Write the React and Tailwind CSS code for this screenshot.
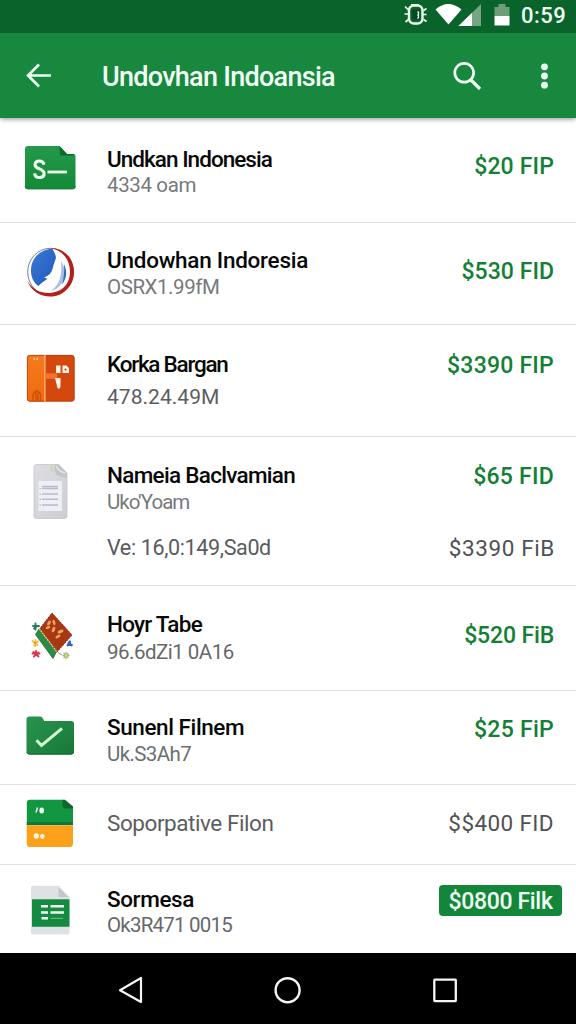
import React from "react";

function SheetFolderIcon() {
  return (
    <svg viewBox="0 0 56 56" className="size-14">
      <defs>
        <linearGradient id="sf" x1="0" y1="0" x2="0" y2="1">
          <stop offset="0" stopColor="#24994a" />
          <stop offset="1" stopColor="#138a38" />
        </linearGradient>
      </defs>
      <path d="M6 6h31.500l7.500 8h6a2.500 2.500 0 0 1 2.500 2.500V46a3 3 0 0 1-3 3H6a3 3 0 0 1-3-3V9a3 3 0 0 1 3-3Z" fill="url(#sf)" />
      <path d="M37.500 6l7.500 8h7.500l-1 1.500H38Z" fill="#0b6b2b" />
      <path d="M3 46a3 3 0 0 0 3 3h44.500a3 3 0 0 0 3-3" fill="none" stroke="#0c7630" strokeWidth="0.800" />
      <path d="M22 24.600C21.400 21.800 20 21 17.300 21c-2.700 0-4.200 1.400-4.200 3.700 0 5 9 3.400 9 8.800 0 2.600-1.800 4-4.600 4-3 0-4.600-1.400-4.900-4.200" fill="none" stroke="#eefff2" strokeWidth="3.100" />
      <path d="M25.500 32H45" stroke="#eefff2" strokeWidth="2.800" />
    </svg>
  );
}

function EmblemIcon() {
  return (
    <svg viewBox="0 0 56 56" className="size-14">
      <defs>
        <linearGradient id="em" x1="0" y1="0" x2="1" y2="1">
          <stop offset="0" stopColor="#3a7ad8" />
          <stop offset="1" stopColor="#2059b8" />
        </linearGradient>
      </defs>
      <ellipse cx="28.500" cy="28" rx="22.800" ry="23.700" fill="#fff" stroke="#66718f" strokeWidth="0.900" />
      <path d="M28 4c14 0 24 10 24 24S41 52.500 28.500 52.500C18 52.500 9 47 5.500 37 11 46 19 49.500 28 49c12-.8 20-9 20-21C48 15 40 6 28 4Z" fill="#b3201c" />
      <path d="M30 4.500C17 6 8.500 15 9 27.500c.2 6.500 3 11.500 7.500 14.500 2-2.500 5-4.500 9-7.200l-3.500-1.300c4.500-1.500 7.500-4.500 8.500-8.500 1-4.500 2.500-8 3.500-11C33.500 10 32 7 30 4.500Z" fill="url(#em)" />
      <path d="M39 17c4.500 7 5 14.500 1.500 21-2.700 5-7 8-11.500 8.500 8-5 11.500-14 10-29.500Z" fill="#a9bfe6" />
      <path d="M42 20c3.500 7.500 2.800 14.500-2 20.500 2-6.500 2.500-13.500 2-20.500Z" fill="#326bbd" />
    </svg>
  );
}

function OrangeBoxIcon() {
  return (
    <svg viewBox="0 0 56 56" className="size-14">
      <defs>
        <linearGradient id="ob" x1="0" y1="0" x2="0" y2="1">
          <stop offset="0" stopColor="#f57a20" />
          <stop offset="1" stopColor="#f26a0c" />
        </linearGradient>
      </defs>
      <rect x="5" y="5" width="47.500" height="46.500" rx="3" fill="#d4480d" />
      <path d="M8 5h14.500v46.500H8a3 3 0 0 1-3-3V8a3 3 0 0 1 3-3Z" fill="url(#ob)" />
      <rect x="5.400" y="5.400" width="46.700" height="45.700" rx="2.800" fill="none" stroke="#b93e0b" strokeWidth="0.800" />
      <path d="M22.900 5v46.500" stroke="#ffc58e" strokeWidth="1.200" />
      <path d="M23 23.300h12v5.500H23Z" fill="#f57428" />
      <path d="M34 15.500h4.500V23H34Z" fill="#fff4e8" />
      <path d="M40.500 15.500h4l2.500 2.800V23h-6.500Z" fill="#fff4e8" />
      <circle cx="43.500" cy="19.600" r="1.100" fill="#c4400d" />
      <path d="M33 28h5.500v8c0 1.800-.6 2.700-1.700 2.700S35 37.500 34.800 35Z" fill="#fff4e8" />
      <path d="M11.500 8.500l1.500 1m1.500-.5h1.500" stroke="#ffe5cc" strokeWidth="1.500" />
      <path d="M11 51v-7l3-3v10m2 0V41l2.500 3v7" fill="none" stroke="#c94e08" strokeWidth="1.300" />
    </svg>
  );
}

function DocumentIcon() {
  return (
    <svg viewBox="0 0 56 56" className="size-14">
      <defs>
        <linearGradient id="dc" x1="0" y1="0" x2="1" y2="1">
          <stop offset="0" stopColor="#dddde2" />
          <stop offset="1" stopColor="#cdced5" />
        </linearGradient>
      </defs>
      <path d="M14.500 1.500h22L45 10v43a2.500 2.500 0 0 1-2.500 2.500h-28A2.500 2.500 0 0 1 12 53V4a2.500 2.500 0 0 1 2.500-2.500Z" fill="url(#dc)" stroke="#bfc0c8" strokeWidth="0.700" />
      <path d="M33 1.500h4L45 10v5l-8.500-2C33 11.500 31.500 6 33 1.500Z" fill="#c3c5c8" />
      <path d="M34.500 3c1 4 3.500 6 9 6.800" fill="none" stroke="#e6e6e8" strokeWidth="1.300" />
      <path d="M30 2.800c-1.500 2-1 4 1.500 5.500" fill="none" stroke="#c8d89e" strokeWidth="1.600" />
      <path d="M16.500 18H40v30H16.500Z" fill="#eeeff5" />
      <path d="M20 23.500h16M20 25.500h16M20 31h16M20 36.300h16M20 42h16" stroke="#b9bbc7" strokeWidth="1.500" />
      <path d="M17.500 25.500h1.500M17.500 31H19M17.500 36.300H19M17.500 42H19" stroke="#adafba" strokeWidth="1.200" />
    </svg>
  );
}

function CarpetIcon() {
  return (
    <svg viewBox="0 0 56 56" className="size-14">
      <path d="M30 5 50 27 34.500 44.500 17.500 21Z" fill="#a83813" stroke="#7d2a12" strokeWidth="1" strokeDasharray="2 1" />
      <path d="M17 21 34.500 43.500 31 50.500 13.500 26.500Z" fill="#2d8a45" stroke="#20663a" strokeWidth="0.800" />
      <path d="M17 20.500 35 44" stroke="#ecd9a0" strokeWidth="1.200" strokeDasharray="2 0.700" />
      <g fill="#e9a566">
        <ellipse cx="27" cy="15" rx="1.500" ry="2.600" transform="rotate(35 27 15)" />
        <ellipse cx="32" cy="14.500" rx="1.400" ry="2.800" transform="rotate(-15 32 14.500)" />
        <ellipse cx="26" cy="19.500" rx="1.200" ry="2.400" transform="rotate(70 26 19.500)" />
        <ellipse cx="31.500" cy="21.500" rx="1.500" ry="3" transform="rotate(25 31.500 21.500)" />
        <ellipse cx="38.500" cy="23.500" rx="1.600" ry="3.200" transform="rotate(65 38.500 23.500)" />
        <ellipse cx="36" cy="28.500" rx="1.300" ry="2.800" transform="rotate(60 36 28.500)" />
      </g>
      <path d="M13.500 15.500v6M11 18h6M12 20.500l3.500-2.500" stroke="#237b60" strokeWidth="1.900" strokeLinecap="round" />
      <path d="M10.500 33l5 4M12 37.500l4-4M13.500 32v6" stroke="#f1c33b" strokeWidth="1.900" strokeLinecap="round" />
      <path d="M11.500 44l5 4.500M12 48.500l4.500-4M14 43v4M10.500 45.500h7" stroke="#d8344e" strokeWidth="1.900" strokeLinecap="round" />
      <path d="M47.500 33.500l-2 4M48 33.500v2M49.500 37.500l-2-3M46 37h4" stroke="#2f66c4" strokeWidth="1.900" strokeLinecap="round" />
      <path d="M44 44.500v6M41 47.500h6M42 45.500l4 4M42 49.500l4-4" stroke="#9fba68" strokeWidth="1.300" strokeLinecap="round" />
      <path d="M36 44.500l4 2.500" stroke="#6b8a4c" strokeWidth="0.800" />
      <circle cx="44" cy="47.500" r="1.200" fill="#e6dc8a" />
      <circle cx="13" cy="35" r="0.900" fill="#d97b2c" />
    </svg>
  );
}

function CheckFolderIcon() {
  return (
    <svg viewBox="0 0 56 56" className="size-14">
      <defs>
        <linearGradient id="cf" x1="0" y1="0" x2="1" y2="1">
          <stop offset="0" stopColor="#299451" />
          <stop offset="1" stopColor="#187836" />
        </linearGradient>
      </defs>
      <path d="M7.500 8.500H18c1.500 0 2.300.8 3 2.200l1.200 2.300H49a3 3 0 0 1 3 3v27.500a3 3 0 0 1-3 3H7.500a3 3 0 0 1-3-3v-32a3 3 0 0 1 3-3Z" fill="url(#cf)" />
      <path d="M4.800 44a3 3 0 0 0 2.700 2.200H49a3 3 0 0 0 2.700-2.200" fill="none" stroke="#0d6c2b" strokeWidth="0.900" />
      <path d="m14.500 32.200 5 5.300L40 20.300" fill="none" stroke="#d5fbd7" strokeWidth="3" />
    </svg>
  );
}

function SplitCardIcon() {
  return (
    <svg viewBox="0 0 56 56" className="size-14">
      <path d="M8 3.800h33L51 12v17H4.800V7A3.200 3.200 0 0 1 8 3.800Z" fill="#129641" />
      <path d="M40.500 3.800H43L51 10.500v2h-6.500a4 4 0 0 1-4-4Z" fill="#0b6a2b" />
      <path d="M4.800 26H51v3.500H4.800Z" fill="#11763a" />
      <path d="M4.800 29.500H51V47.500a3.500 3.500 0 0 1-3.500 3.500H8a3.200 3.200 0 0 1-3.200-3.200Z" fill="#fda11a" />
      <path d="M4.800 29.500H51" stroke="#e3bb4c" strokeWidth="1" />
      <ellipse cx="19.700" cy="14.600" rx="2.300" ry="3" fill="#f2fff4" />
      <path d="M15.500 11.500l-1.500 5" stroke="#d8f3dc" strokeWidth="1.600" />
      <ellipse cx="14.300" cy="40" rx="2.600" ry="2.800" fill="#fff8e5" />
      <ellipse cx="20.300" cy="40.500" rx="2.200" ry="2.400" fill="#fff8e5" />
    </svg>
  );
}

function SpreadsheetIcon() {
  return (
    <svg viewBox="0 0 56 56" className="size-14">
      <path d="M11 3.800h25.500L47.500 15v35.500a2 2 0 0 1-2 2H11a2 2 0 0 1-2-2V5.800a2 2 0 0 1 2-2Z" fill="#dfe2e5" />
      <path d="M36.500 3.800 47.500 15H38a1.500 1.500 0 0 1-1.500-1.500Z" fill="#c3c6ca" />
      <path d="M37 5l9.500 9.500" stroke="#eff0f2" strokeWidth="1" />
      <path d="M10 17.200h37.500v27.500H10Z" fill="#158b41" />
      <path d="M19 24.300h7M28.500 24.300H42M19 30.500h7M28.500 30.500H42M19.500 36.300H26" stroke="#effff3" strokeWidth="2.400" />
      <path d="M28.500 36.300H41" stroke="#75bd8b" strokeWidth="1" />
    </svg>
  );
}

const rows = [
  {
    Icon: SheetFolderIcon, box: "h-[105px]", icon: "mt-[22px]",
    title: "Undkan Indonesia", titleClass: "mt-[28px] tracking-[-0.96px]",
    sub: "4334 oam", subClass: "text-[20.5px] tracking-[-0.37px] text-[#77797c]",
    price: "$20 FIP", priceClass: "mt-[36px] tracking-[0.15px]",
  },
  {
    Icon: EmblemIcon, box: "h-[102px]", icon: "mt-[21px]",
    title: "Undowhan Indoresia", titleClass: "mt-[24px] tracking-[-0.26px]",
    sub: "OSRX1.99fM", subClass: "mt-[1px] text-[20.5px] tracking-[-0.44px] text-[#77797c]",
    price: "$530 FID", priceClass: "mt-[36px] tracking-[0.04px]",
  },
  {
    Icon: OrangeBoxIcon, box: "h-[112px]", icon: "mt-[25px]",
    title: "Korka Bargan", titleClass: "mt-[26px] tracking-[-1.25px]",
    sub: "478.24.49M", subClass: "mt-[7px] text-[21px] tracking-[0.03px] text-[#5b5d60]",
    price: "$3390 FIP", priceClass: "mt-[28px] tracking-[0.22px]",
  },
  {
    Icon: DocumentIcon, box: "h-[149px]", icon: "mt-[26px]",
    title: "Nameia Baclvamian", titleClass: "mt-[25px] tracking-[-0.71px]",
    sub: "Uko'Yoam", subClass: "mt-[1px] text-[20.5px] tracking-[-0.97px] text-[#77797c]",
    extra: "Ve: 16,0:149,Sa0d", extraPrice: "$3390 FiB",
    price: "$65 FID", priceClass: "mt-[27px] tracking-[0.23px]",
  },
  {
    Icon: CarpetIcon, box: "h-[105px]", icon: "mt-[22px]",
    title: "Hoyr Tabe", titleClass: "mt-[25px] tracking-[-0.75px]",
    sub: "96.6dZi1 0A16", subClass: "mt-[2px] text-[20.5px] tracking-[-0.51px] text-[#66686b]",
    price: "$520 FiB", priceClass: "mt-[37px] tracking-[-0.15px]",
  },
  {
    Icon: CheckFolderIcon, box: "h-[94px]", icon: "mt-[17px]",
    title: "Sunenl Filnem", titleClass: "mt-[23px] tracking-[-0.42px]",
    sub: "Uk.S3Ah7", subClass: "mt-[1px] text-[20.5px] tracking-[-0.6px] text-[#6d6f72]",
    price: "$25 FiP", priceClass: "mt-[26px] tracking-[0.26px]",
  },
  {
    Icon: SplitCardIcon, box: "h-[80px]", icon: "mt-[11px]", plain: true,
    title: "Soporpative Filon", titleClass: "mt-[25px] tracking-[-0.44px]",
    price: "$$400 FID", priceClass: "mt-[25px] tracking-[0.39px]",
  },
  {
    Icon: SpreadsheetIcon, box: "h-[88px]", icon: "mt-[17px]", last: true,
    title: "Sormesa", titleClass: "mt-[21px] tracking-[-0.39px]",
    sub: "Ok3R471 0015", subClass: "text-[20.5px] tracking-[-0.79px] text-[#66686b]",
    badge: "$0800 Filk",
  },
];

function Row({ Icon, box, icon, title, titleClass, sub, subClass, extra, extraPrice, price, priceClass, plain, last, badge }) {
  return (
    <li className={`flex ${box} ${last ? "" : "border-b border-[#e0e1e3]"}`}>
      <div className={`ml-[22px] w-[85px] shrink-0 ${icon}`}>
        <Icon />
      </div>
      <div className="min-w-0 grow">
        <div className="flex justify-between">
          <div>
            <h2 className={`h-[26px] whitespace-nowrap text-[22.5px] leading-[26px] ${titleClass} ${plain ? "text-[#5c5d60]" : "font-medium text-[#080808]"}`}>
              {title}
            </h2>
            {sub && <p className={`h-[26px] whitespace-nowrap leading-[26px] ${subClass}`}>{sub}</p>}
          </div>
          {price && (
            <span className={`mr-[22px] h-[26px] whitespace-nowrap leading-[26px] ${priceClass} ${plain ? "text-[22.5px] text-[#505154]" : "text-[23px] font-medium text-[#138035]"}`}>
              {price}
            </span>
          )}
          {badge && (
            <span className="mr-[14px] mt-[20px] flex h-[31px] w-[123px] items-center justify-center whitespace-nowrap rounded bg-[#138639] pt-[3px] text-[23px] font-medium tracking-[-0.33px] text-[#f0fff4]">
              {badge}
            </span>
          )}
        </div>
        {extra && (
          <div className="mt-5 flex justify-between leading-[26px]">
            <span className="whitespace-nowrap text-[21.5px] tracking-[-0.36px] text-[#595b5e]">{extra}</span>
            <span className="mr-[21px] whitespace-nowrap text-[22.5px] tracking-[0.6px] text-[#505154]">{extraPrice}</span>
          </div>
        )}
      </div>
    </li>
  );
}

function StatusBar() {
  return (
    <div className="flex h-[33px] items-start bg-[#09632b]">
      <svg viewBox="400 0 120 33" className="ml-[400px] h-[33px] w-[120px] shrink-0">
        <rect x="409" y="5.500" width="13.500" height="18" rx="5" fill="none" stroke="#eafff0" strokeWidth="2.400" />
        <path d="M412 9.500h8v10h-8Z" fill="#07491f" />
        <path d="M417 12h1.500v6H417M417 15h1.500" fill="none" stroke="#eafff0" strokeWidth="1.200" />
        <path d="M405 6.500l3.500 3.500M404.500 14h4M405.500 22l3.500-3M426.500 8.500l-3 2M423 14.500h3.500M426.500 21.500l-3-2M411 4.800h8" fill="none" stroke="#eafff0" strokeWidth="1.700" />
        <path d="M435.500 9.500Q448-1.500 461.500 9.500L448.500 24.500Z" fill="#fff" />
        <path d="M458.500 26 481 4v22Z" fill="#75a583" />
        <path d="M458.500 26 472 12.800V26Z" fill="#fff" />
        <path d="M494.500 7h4V4h7v3h4v9h-15Z" fill="#6d9d7b" />
        <path d="M494.500 16h15v9.500h-15Z" fill="#fff" />
      </svg>
      <span className="ml-[1px] h-[30px] text-[22px] font-medium leading-[31px] tracking-[0.5px] text-[#f2fff5]">0:59</span>
    </div>
  );
}

export default function App() {
  return (
    <div className="flex h-[1024px] w-[576px] flex-col overflow-hidden bg-white font-[Roboto,sans-serif]">
      <header className="relative shrink-0 bg-[#17883e] shadow-[0_1px_5px_rgba(0,0,0,0.45)]">
        <StatusBar />
        <div className="flex h-[85px] items-center">
          <svg viewBox="0 0 30 30" className="ml-6 size-[30px]">
            <path d="M27 14.500H4M15 3.500 4 14.500l11 11" fill="none" stroke="#f0fff4" strokeWidth="2.600" />
          </svg>
          <h1 className="ml-[48px] grow whitespace-nowrap pt-[3px] text-[27px] font-medium tracking-[-0.72px] text-[#f2fff5]">Undovhan Indoansia</h1>
          <svg viewBox="0 0 32 32" className="size-8">
            <circle cx="13.200" cy="12.800" r="9.400" fill="none" stroke="#f0fff4" strokeWidth="2.700" />
            <path d="m19.500 19.500 9.500 9.500" stroke="#f0fff4" strokeWidth="3.200" />
          </svg>
          <svg viewBox="0 0 10 30" className="ml-[56px] mr-[27px] h-[30px] w-[10px]" fill="#f0fff4">
            <circle cx="5.500" cy="5.800" r="3.400" />
            <circle cx="5.500" cy="15" r="3.400" />
            <circle cx="5.500" cy="24.200" r="3.400" />
          </svg>
        </div>
      </header>
      <ul className="h-[835px] shrink-0">
        {rows.map((row) => (
          <Row key={row.title} {...row} />
        ))}
      </ul>
      <nav className="grid h-[71px] shrink-0 grid-cols-[261px_53px_262px] items-start bg-black">
        <svg viewBox="0 0 28 28" className="ml-[117px] mt-[23px] size-7">
          <path d="M24 2v24L3 14.300Z" fill="none" stroke="#f5f5f5" strokeWidth="2.200" strokeLinejoin="round" />
        </svg>
        <svg viewBox="0 0 28 28" className="ml-[13px] mt-[23px] size-7">
          <circle cx="13.600" cy="14.200" r="12" fill="none" stroke="#f5f5f5" strokeWidth="2.400" />
        </svg>
        <svg viewBox="0 0 28 28" className="ml-[117px] mt-[23px] size-7">
          <rect x="3.300" y="3.600" width="21.500" height="21.500" rx="0.500" fill="none" stroke="#f5f5f5" strokeWidth="2.300" />
        </svg>
      </nav>
    </div>
  );
}
